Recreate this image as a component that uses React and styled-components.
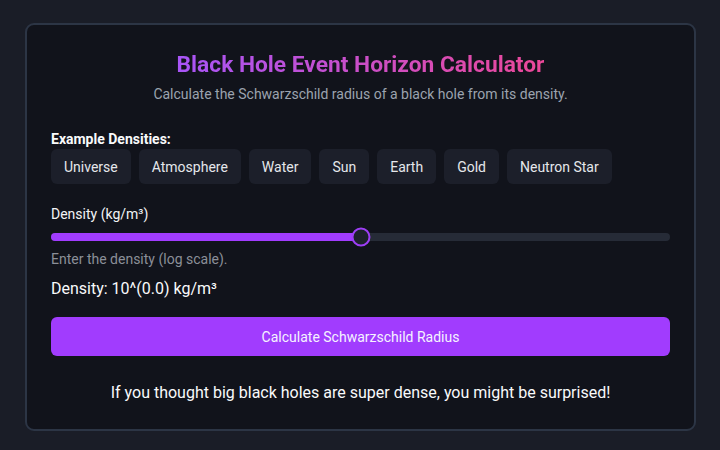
import React, { useState } from "react";
import styled, { createGlobalStyle } from "styled-components";

const Global = createGlobalStyle`
  html, body { margin: 0; padding: 0; background: #1a1d27; }
  body { font-family: Roboto, "Noto Sans", "Liberation Sans", sans-serif; color: #f3f4f6; }
  * { box-sizing: border-box; }
`;

const Page = styled.div`
  padding: 23px 24px 23px 25px;
  min-height: 450px;
`;

const Card = styled.div`
  background: #11131b;
  border: 2px solid #2c3545;
  border-radius: 9px;
  padding: 24px;
  display: flex;
  flex-direction: column;
`;

const Title = styled.h1`
  margin: 0;
  font-size: 22.75px;
  line-height: 32px;
  font-weight: 700;
  text-align: center;
  background: linear-gradient(90deg, #a855f7, #ec4899);
  -webkit-background-clip: text;
  background-clip: text;
  color: transparent;
  align-self: center;
`;

const Subtitle = styled.p`
  margin: 3px 0 0;
  font-size: 14px;
  line-height: 20px;
  color: #9ca3af;
  text-align: center;
`;

const SectionLabel = styled.div`
  margin-top: 26px;
  font-size: 14px;
  line-height: 18px;
  font-weight: 700;
  color: #f9fafb;
`;

const Presets = styled.div`
  display: flex;
  gap: 8px;
  margin-top: 1px;
  flex-wrap: wrap;
`;

const PresetButton = styled.button`
  height: 35px;
  padding: 0 13px;
  border: none;
  border-radius: 6px;
  background: #1c1f2a;
  color: #e5e7eb;
  font-family: inherit;
  font-size: 14px;
  cursor: pointer;
`;

const FieldLabel = styled.div`
  margin-top: 21px;
  font-size: 14px;
  line-height: 18px;
  color: #f3f4f6;
`;

const SliderWrap = styled.div`
  position: relative;
  height: 18px;
  margin-top: 5px;
  display: flex;
  align-items: center;
`;

const Track = styled.div`
  position: relative;
  width: 100%;
  height: 8px;
  border-radius: 4px;
  background: #262b37;
`;

const Fill = styled.div`
  height: 100%;
  border-radius: 4px;
  background: #a13cfe;
`;

const Thumb = styled.div`
  position: absolute;
  top: 50%;
  width: 19px;
  height: 19px;
  border-radius: 50%;
  background: #1d212b;
  border: 2px solid #9d3ef5;
  transform: translate(-50%, -50%);
`;

const Help = styled.div`
  margin-top: 4px;
  font-size: 14px;
  line-height: 18px;
  color: #8b8f98;
`;

const Value = styled.div`
  margin-top: 10px;
  font-size: 16px;
  line-height: 22px;
  color: #f9fafb;
`;

const Primary = styled.button`
  margin-top: 17px;
  height: 39px;
  border: none;
  border-radius: 6px;
  background: #a13cfe;
  color: #f5f3ff;
  font-family: inherit;
  font-size: 14px;
  cursor: pointer;
`;

const Note = styled.p`
  margin: 25px 0 0;
  font-size: 16px;
  line-height: 24px;
  text-align: center;
  color: #f9fafb;
`;

const presets = ["Universe", "Atmosphere", "Water", "Sun", "Earth", "Gold", "Neutron Star"];

export default function App() {
  const [pct] = useState(50);
  return (
    <>
      <Global />
      <Page>
        <Card>
          <Title>Black Hole Event Horizon Calculator</Title>
          <Subtitle>Calculate the Schwarzschild radius of a black hole from its density.</Subtitle>
          <SectionLabel>Example Densities:</SectionLabel>
          <Presets>
            {presets.map((p) => (
              <PresetButton key={p}>{p}</PresetButton>
            ))}
          </Presets>
          <FieldLabel>Density (kg/m³)</FieldLabel>
          <SliderWrap>
            <Track>
              <Fill style={{ width: `${pct}%` }} />
              <Thumb style={{ left: `${pct}%` }} />
            </Track>
          </SliderWrap>
          <Help>Enter the density (log scale).</Help>
          <Value>Density: 10^(0.0) kg/m³</Value>
          <Primary>Calculate Schwarzschild Radius</Primary>
          <Note>If you thought big black holes are super dense, you might be surprised!</Note>
        </Card>
      </Page>
    </>
  );
}
